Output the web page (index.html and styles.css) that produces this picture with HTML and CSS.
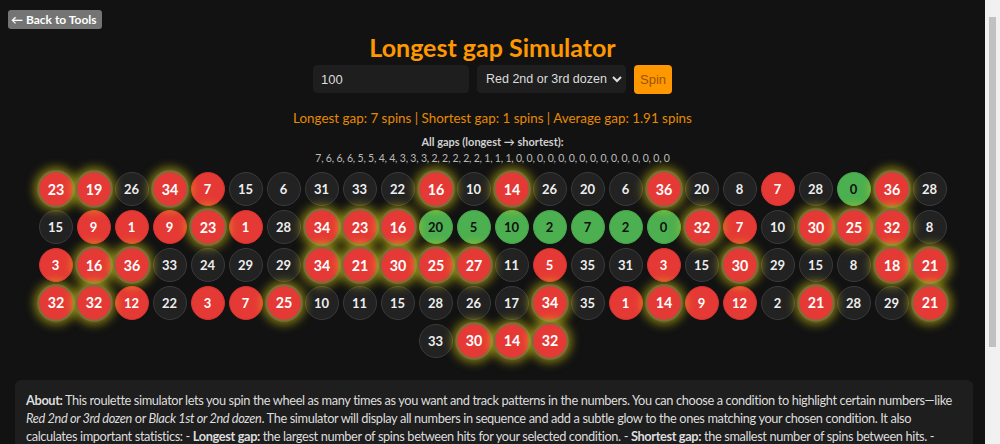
FILE: index.html
```html
<!DOCTYPE html>
<html lang="en">
<head>
<meta charset="utf-8">
<title>Longest gap Simulator</title>
<link rel="stylesheet" href="styles.css">
</head>
<body>
<div class="top"><a class="back" href="#">← Back to Tools</a></div>
<h1 class="title">Longest gap Simulator</h1>
<div class="controls">
  <input class="count" type="text" value="100">
  <select class="cond">
    <option>Red 2nd or 3rd dozen</option>
    <option>Black 1st or 2nd dozen</option>
  </select>
  <button class="spin">Spin</button>
</div>
<p class="stats">Longest gap: 7 spins | Shortest gap: 1 spins | Average gap: 1.91 spins</p>
<p class="gaps-label">All gaps (longest → shortest):</p>
<p class="gaps">7, 6, 6, 6, 5, 5, 4, 4, 3, 3, 3, 2, 2, 2, 2, 2, 1, 1, 1, 0, 0, 0, 0, 0, 0, 0, 0, 0, 0, 0, 0, 0, 0, 0</p>
<div class="balls">
  <span class="ball r hit">23</span><span class="ball r hit">19</span><span class="ball b">26</span><span class="ball r hit">34</span><span class="ball r">7</span><span class="ball b">15</span><span class="ball b">6</span><span class="ball b">31</span><span class="ball b">33</span><span class="ball b">22</span><span class="ball r hit">16</span><span class="ball b">10</span><span class="ball r hit">14</span><span class="ball b">26</span><span class="ball b">20</span><span class="ball b">6</span><span class="ball r hit">36</span><span class="ball b">20</span><span class="ball b">8</span><span class="ball r">7</span><span class="ball b">28</span><span class="ball g">0</span><span class="ball r hit">36</span><span class="ball b">28</span>
  <span class="ball b">15</span><span class="ball r">9</span><span class="ball r">1</span><span class="ball r">9</span><span class="ball r hit">23</span><span class="ball r">1</span><span class="ball b">28</span><span class="ball r hit">34</span><span class="ball r hit">23</span><span class="ball r hit">16</span><span class="ball g">20</span><span class="ball g">5</span><span class="ball g">10</span><span class="ball g">2</span><span class="ball g">7</span><span class="ball g">2</span><span class="ball g">0</span><span class="ball r hit">32</span><span class="ball r">7</span><span class="ball b">10</span><span class="ball r hit">30</span><span class="ball r hit">25</span><span class="ball r hit">32</span><span class="ball b">8</span>
  <span class="ball r">3</span><span class="ball r hit">16</span><span class="ball r hit">36</span><span class="ball b">33</span><span class="ball b">24</span><span class="ball b">29</span><span class="ball b">29</span><span class="ball r hit">34</span><span class="ball r hit">21</span><span class="ball r hit">30</span><span class="ball r hit">25</span><span class="ball r hit">27</span><span class="ball b">11</span><span class="ball r">5</span><span class="ball b">35</span><span class="ball b">31</span><span class="ball r">3</span><span class="ball b">15</span><span class="ball r hit">30</span><span class="ball b">29</span><span class="ball b">15</span><span class="ball b">8</span><span class="ball r hit">18</span><span class="ball r hit">21</span>
  <span class="ball r hit">32</span><span class="ball r hit">32</span><span class="ball r">12</span><span class="ball b">22</span><span class="ball r">3</span><span class="ball r">7</span><span class="ball r hit">25</span><span class="ball b">10</span><span class="ball b">11</span><span class="ball b">15</span><span class="ball b">28</span><span class="ball b">26</span><span class="ball b">17</span><span class="ball r hit">34</span><span class="ball b">35</span><span class="ball r">1</span><span class="ball r hit">14</span><span class="ball r">9</span><span class="ball r">12</span><span class="ball b">2</span><span class="ball r hit">21</span><span class="ball b">28</span><span class="ball b">29</span><span class="ball r hit">21</span>
  <span class="ball b">33</span><span class="ball r hit">30</span><span class="ball r hit">14</span><span class="ball r hit">32</span>
</div>
<div class="about">
  <p><strong>About:</strong> This roulette simulator lets you spin the wheel as many times as you want and track patterns in the numbers. You can choose a condition to highlight certain numbers—like <em>Red 2nd or 3rd dozen</em> or <em>Black 1st or 2nd dozen</em>. The simulator will display all numbers in sequence and add a subtle glow to the ones matching your chosen condition. It also calculates important statistics: - <strong>Longest gap:</strong> the largest number of spins between hits for your selected condition. - <strong>Shortest gap:</strong> the smallest number of spins between hits. - <strong>Average gap:</strong> the average number of spins between hits. - <strong>All gaps:</strong> every gap sorted from longest to shortest, so you can see how often long droughts appear.</p>
</div>
</body>
</html>
```
FILE: styles.css
```css
html {
  margin: 0;
  padding: 0;
  background:
    linear-gradient(#c1c1c1, #c1c1c1) no-repeat right 4px top 17px / 7px 330px,
    #f1f1f1;
}
body {
  margin: 0;
  padding: 0;
  width: 985px;
  min-height: 100vh;
  background: #121212;
  color: #e0e0e0;
  font-family: Lato, "Noto Sans", sans-serif;
}
.top {
  padding: 8px 0 0 8px;
  height: 19px;
}
.back {
  display: inline-block;
  background: #747474;
  color: #fff;
  font-weight: 700;
  font-size: 12px;
  line-height: 19px;
  padding: 0 5px 0 3px;
  border-radius: 3px;
  text-decoration: none;
}
.title {
  margin: 4px 0 2px;
  text-align: center;
  font-size: 25px;
  line-height: 32px;
  color: #ff9800;
  font-weight: 700;
}
.controls {
  display: flex;
  justify-content: center;
  gap: 8px;
  height: 29px;
}
.count {
  box-sizing: border-box;
  width: 156px;
  height: 28px;
  background: #1e1e1e;
  border: 1px solid #1e1e1e;
  border-radius: 4px;
  color: #ddd;
  font-family: "Liberation Sans", Arial, sans-serif;
  font-size: 13px;
  padding: 0 7px;
  outline: none;
}
.cond {
  box-sizing: border-box;
  width: 149px;
  height: 28px;
  background: #1e1e1e;
  border: 1px solid #1e1e1e;
  border-radius: 4px;
  color: #ddd;
  font-family: "Liberation Sans", Arial, sans-serif;
  font-size: 12.5px;
  padding: 0 0 0 4px;
}
.spin {
  box-sizing: border-box;
  width: 38px;
  height: 29px;
  background: #ff9800;
  border: none;
  border-radius: 4px;
  color: #9a5300;
  font-family: "Liberation Sans", Arial, sans-serif;
  font-size: 13px;
  padding: 0;
}
.stats {
  margin: 14px 0 0;
  text-align: center;
  font-size: 13.4px;
  line-height: 20px;
  color: #e68a00;
}
.gaps-label {
  margin: 6px 0 0;
  text-align: center;
  font-size: 11px;
  font-weight: 700;
  line-height: 16px;
  color: #d0d0d0;
}
.gaps {
  margin: 0;
  text-align: center;
  font-size: 10.5px;
  letter-spacing: -0.2px;
  line-height: 16px;
  color: #bbb;
}
.balls {
  display: flex;
  flex-wrap: wrap;
  justify-content: center;
  width: 912px;
  margin: 4px auto 0;
}
.ball {
  box-sizing: border-box;
  width: 34px;
  height: 34px;
  margin: 2px;
  border-radius: 50%;
  display: flex;
  align-items: center;
  justify-content: center;
  font-size: 13px;
  font-weight: 700;
  color: #fff;
}
.b {
  background: #222;
  border: 1px solid #3a3a3a;
  color: #eee;
}
.r {
  background: #e53935;
  border: 1px solid #d13330;
}
.g {
  background: #4caf50;
  border: 1px solid #47a34b;
  color: #111;
}
.hit {
  transform: scale(1.1);
  border: 2px solid #7d6d3a;
  box-shadow: 0 0 9px 3px rgba(230, 220, 20, 0.5);
}
.about {
  margin: 20px 12px 0 15px;
  background: #1e1e1e;
  border-radius: 6px;
  padding: 11px 11px 14px;
}
.about p {
  margin: 0;
  font-size: 12.8px;
  letter-spacing: -0.38px;
  line-height: 18px;
  color: #ddd;
}
```
